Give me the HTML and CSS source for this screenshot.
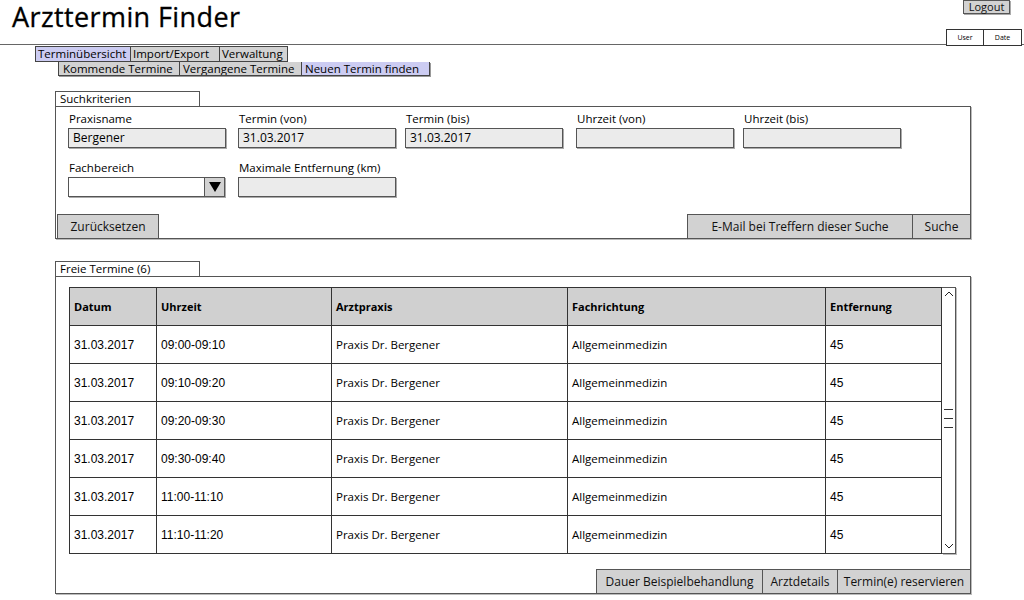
FILE: index.html
```html
<!DOCTYPE html>
<html lang="de">
<head>
<meta charset="utf-8">
<title>Arzttermin Finder</title>
<link rel="stylesheet" href="styles.css">
</head>
<body>
<header class="top">
  <h1 class="title">Arzttermin Finder</h1>
  <div class="top-right">
    <button class="btn logout">Logout</button>
    <div class="userdate"><span class="ud">User</span><span class="ud">Date</span></div>
  </div>
</header>

<nav class="tabs">
  <span class="tab tab-active t1">Terminübersicht</span>
  <span class="tab t2">Import/Export</span>
  <span class="tab t3">Verwaltung</span>
</nav>
<nav class="subtabs">
  <span class="subtab s1">Kommende Termine</span>
  <span class="subtab s2">Vergangene Termine</span>
  <span class="subtab subtab-active s3">Neuen Termin finden</span>
</nav>

<section class="panel panel-search">
  <div class="panel-tab">Suchkriterien</div>
  <div class="panel-body search-body">
    <div class="fields">
      <div class="field"><label class="lbl">Praxisname</label><div class="input">Bergener</div></div>
      <div class="field"><label class="lbl">Termin (von)</label><div class="input">31.03.2017</div></div>
      <div class="field"><label class="lbl">Termin (bis)</label><div class="input">31.03.2017</div></div>
      <div class="field"><label class="lbl">Uhrzeit (von)</label><div class="input"></div></div>
      <div class="field"><label class="lbl">Uhrzeit (bis)</label><div class="input"></div></div>
      <div class="field"><label class="lbl">Fachbereich</label>
        <div class="select"><span class="select-val"></span><span class="select-arrow"><svg width="14" height="12" viewBox="0 0 14 12"><path d="M1 1 L13 1 L7 11 Z" fill="#000"/></svg></span></div>
      </div>
      <div class="field"><label class="lbl">Maximale Entfernung (km)</label><div class="input"></div></div>
    </div>
    <div class="btnrow">
      <button class="btn b-reset">Zurücksetzen</button>
      <div class="btngroup">
        <button class="btn b-mail">E-Mail bei Treffern dieser Suche</button>
        <button class="btn b-search">Suche</button>
      </div>
    </div>
  </div>
</section>

<section class="panel panel-results">
  <div class="panel-tab">Freie Termine (6)</div>
  <div class="panel-body results-body">
    <div class="tablewrap">
      <table class="grid">
        <colgroup><col class="c1"><col class="c2"><col class="c3"><col class="c4"><col class="c5"></colgroup>
        <thead>
          <tr><th>Datum</th><th>Uhrzeit</th><th>Arztpraxis</th><th>Fachrichtung</th><th>Entfernung</th></tr>
        </thead>
        <tbody>
          <tr><td class="num">31.03.2017</td><td class="num">09:00-09:10</td><td>Praxis Dr. Bergener</td><td>Allgemeinmedizin</td><td class="num">45</td></tr>
          <tr><td class="num">31.03.2017</td><td class="num">09:10-09:20</td><td>Praxis Dr. Bergener</td><td>Allgemeinmedizin</td><td class="num">45</td></tr>
          <tr><td class="num">31.03.2017</td><td class="num">09:20-09:30</td><td>Praxis Dr. Bergener</td><td>Allgemeinmedizin</td><td class="num">45</td></tr>
          <tr><td class="num">31.03.2017</td><td class="num">09:30-09:40</td><td>Praxis Dr. Bergener</td><td>Allgemeinmedizin</td><td class="num">45</td></tr>
          <tr><td class="num">31.03.2017</td><td class="num">11:00-11:10</td><td>Praxis Dr. Bergener</td><td>Allgemeinmedizin</td><td class="num">45</td></tr>
          <tr><td class="num">31.03.2017</td><td class="num">11:10-11:20</td><td>Praxis Dr. Bergener</td><td>Allgemeinmedizin</td><td class="num">45</td></tr>
        </tbody>
      </table>
      <div class="scroll">
        <svg class="arr" width="12" height="10" viewBox="0 0 12 10"><path d="M2 7 L6 3 L10 7" fill="none" stroke="#222" stroke-width="1"/></svg>
        <div class="thumb"><i></i><i></i><i></i></div>
        <svg class="arr arr-down" width="12" height="10" viewBox="0 0 12 10"><path d="M2 3 L6 7 L10 3" fill="none" stroke="#222" stroke-width="1"/></svg>
      </div>
    </div>
    <div class="btnrow btnrow-right">
      <div class="btngroup">
        <button class="btn b-dauer">Dauer Beispielbehandlung</button>
        <button class="btn b-arzt">Arztdetails</button>
        <button class="btn b-res">Termin(e) reservieren</button>
      </div>
    </div>
  </div>
</section>
</body>
</html>
```

FILE: styles.css
```css
* { box-sizing: border-box; }
html, body { margin: 0; padding: 0; background: #fff; }
body {
  width: 1024px;
  height: 600px;
  overflow: hidden;
  font-family: "Open Sans", "DejaVu Sans", sans-serif;
  font-size: 12px;
  color: #000;
}

.btn {
  font-family: inherit;
  font-size: 12px;
  background: #d2d2d2;
  border: 1px solid #555;
  color: #111;
  padding: 0;
  margin: 0;
  cursor: default;
}

/* header */
.top {
  display: flex;
  justify-content: space-between;
  align-items: flex-start;
  height: 45px;
  border-bottom: 1px solid #666;
}
.title {
  margin: 0;
  padding: 0 0 0 12px;
  font-size: 27px;
  font-weight: normal;
  line-height: 34px;
  letter-spacing: 0.4px;
  -webkit-text-stroke: 0.3px #000;
}
.top-right {
  display: flex;
  flex-direction: column;
  align-items: flex-end;
}
.logout {
  width: 47px;
  height: 14px;
  line-height: 12px;
  font-size: 11px;
  margin-right: 14px;
  box-shadow: 1px 1px 0 #aaa;
}
.userdate {
  display: flex;
  margin-top: 14px;
  margin-right: 2px;
  position: relative;
  top: 1px;
}
.ud {
  width: 38px;
  height: 17px;
  border: 1px solid #333;
  font-size: 7px;
  line-height: 15px;
  text-align: center;
  background: #fff;
}
.ud + .ud { border-left: none; }

/* tabs */
.tabs {
  display: flex;
  margin: 1px 0 0 35px;
  height: 16px;
}
.tab {
  height: 16px;
  border: 1px solid #444;
  background: #d2d2d2;
  font-size: 11.5px;
  line-height: 14px;
  padding-left: 2px;
  white-space: nowrap;
  overflow: hidden;
}
.tab + .tab { border-left: none; }
.tab-active { background: #ccccf2; }
.t1 { width: 96px; }
.t2 { width: 89px; }
.t3 { width: 68px; }

.subtabs {
  display: flex;
  margin-left: 58px;
  height: 14px;
}
.subtab {
  height: 14px;
  border: 1px solid #444;
  border-top: none;
  background: #d2d2d2;
  font-size: 11.5px;
  line-height: 13px;
  padding-left: 4px;
  white-space: nowrap;
  overflow: hidden;
  box-shadow: 1px 1px 0 #999;
}
.subtab + .subtab { border-left: none; padding-left: 3px; }
.subtab-active { background: #ccccf2; }
.s1 { width: 122px; }
.s2 { width: 122px; }
.s3 { width: 128px; }

/* panels */
.panel {
  margin-left: 55px;
  width: 916px;
}
.panel-search { margin-top: 15px; }
.panel-results { margin-top: 22px; }
.panel-tab {
  width: 145px;
  height: 15px;
  border: 1px solid #555;
  border-bottom: none;
  font-size: 11.5px;
  line-height: 14px;
  padding-left: 4px;
  white-space: nowrap;
}
.panel-body {
  border: 1px solid #555;
  box-shadow: 1px 1px 0 #bbb;
  display: flex;
  flex-direction: column;
}
.search-body { height: 133px; }
.results-body { height: 318px; }

.fields {
  display: grid;
  grid-template-columns: 170px 167px 171px 167px 157px;
  row-gap: 13px;
  padding: 5px 0 0 12px;
}
.field { display: flex; flex-direction: column; }
.lbl {
  font-size: 11.5px;
  line-height: 14px;
  height: 14px;
  padding-left: 1px;
  margin-bottom: 2px;
  white-space: nowrap;
}
.input {
  width: 158px;
  height: 20px;
  background: #ebebeb;
  border: 1px solid #555;
  box-shadow: 1px 1px 0 #aaa;
  font-size: 12px;
  line-height: 18px;
  padding-left: 4px;
}
.select {
  width: 157px;
  height: 20px;
  display: flex;
  border: 1px solid #555;
  background: #fff;
  box-shadow: 1px 1px 0 #aaa;
}
.select-val { flex: 1; }
.select-arrow {
  width: 20px;
  border-left: 1px solid #555;
  background: #d2d2d2;
  display: flex;
  align-items: center;
  justify-content: center;
}

.btnrow {
  margin-top: auto;
  display: flex;
  justify-content: space-between;
  align-items: flex-end;
}
.btnrow-right { justify-content: flex-end; }
.btngroup { display: flex; }
.btngroup .btn + .btn { border-left: none; }
.btnrow .btn { height: 25px; margin-bottom: -1px; }
.b-reset { width: 102px; margin-left: 1px; }
.b-mail { width: 226px; }
.b-search { width: 58px; margin-right: -1px; }
.b-dauer { width: 167px; }
.b-arzt { width: 75px; }
.b-res { width: 133px; margin-right: -1px; }

/* table */
.tablewrap {
  display: flex;
  padding: 10px 0 0 13px;
}
.grid {
  border-collapse: collapse;
  table-layout: fixed;
  width: 872px;
}
.c1 { width: 87px; }
.c2 { width: 175px; }
.c3 { width: 236px; }
.c4 { width: 258px; }
.c5 { width: 116px; }
.grid th, .grid td {
  border: 1px solid #333;
  height: 38px;
  padding: 0 0 0 4px;
  text-align: left;
  vertical-align: middle;
  white-space: nowrap;
}
.grid th {
  background: #d0d0d0;
  font-size: 11px;
  font-weight: bold;
}
.grid td { font-size: 11.5px; }
.grid td.num { font-family: "Liberation Sans", Arial, sans-serif; font-size: 12px; }

.scroll {
  width: 14px;
  height: 267px;
  border: 1px solid #555;
  border-left: none;
  display: flex;
  flex-direction: column;
  align-items: center;
  box-shadow: 1px 1px 0 #bbb;
}
.arr { display: block; margin-top: 1px; }
.arr-down { margin-top: auto; margin-bottom: 2px; }
.thumb {
  margin-top: 110px;
  display: flex;
  flex-direction: column;
  gap: 8px;
  width: 100%;
  padding: 0 2px;
}
.thumb i {
  display: block;
  height: 1px;
  background: #333;
}
```
